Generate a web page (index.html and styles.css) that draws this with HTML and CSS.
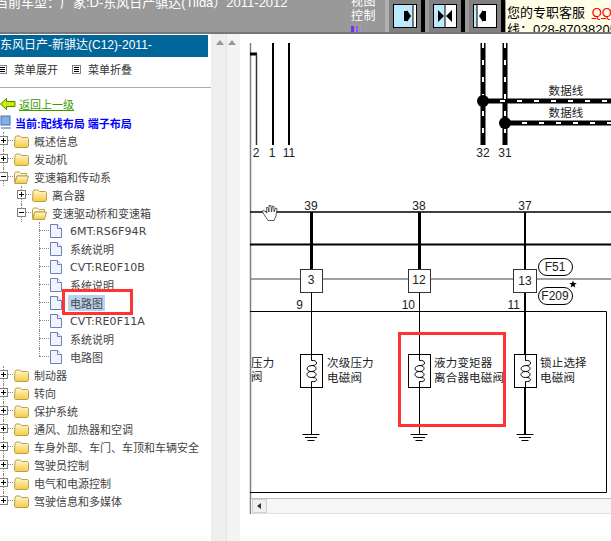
FILE: index.html
```html
<!DOCTYPE html>
<html lang="zh-CN">
<head>
    <meta charset="UTF-8">
    <title>电路图</title>
    <link rel="stylesheet" href="styles.css">
</head>
<body>
    <svg class="defs" width="0" height="0">
        <defs>
            <linearGradient id="folder-fill" x1="0" y1="0" x2="0" y2="1">
                <stop offset="0" stop-color="#fff8d2"/>
                <stop offset="1" stop-color="#f6c93e"/>
            </linearGradient>
        </defs>
        <symbol id="folder" viewBox="0 0 15 14">
            <path d="M1 3.5 L2 2 H6 L7.5 3.5 H13.5 L14.5 4.5 V12.5 L13.5 13.5 H1.5 L0.5 12.5 Z" fill="url(#folder-fill)" stroke="#b9a050"/>
        </symbol>
        <symbol id="folder-open" viewBox="0 0 15 14">
            <path d="M0.5 3.5 L1.5 2 H5.5 L7 3.5 H12.5 V6 H3 L0.5 12.5 Z" fill="#fff6d0" stroke="#b9a050"/>
            <path d="M3 6 H14.5 L12.5 13.5 H0.8 Z" fill="url(#folder-fill)" stroke="#b9a050"/>
        </symbol>
        <symbol id="file" viewBox="0 0 12 14">
            <path d="M0.5 0.5 H7.5 L11.5 4.5 V13.5 H0.5 Z" fill="#eef3fd" stroke="#6f7fb8"/>
            <path d="M7.5 0.5 V4.5 H11.5" fill="#fff" stroke="#6f7fb8"/>
        </symbol>
        <symbol id="menu-box" viewBox="0 0 9 9">
            <rect x="0.5" y="0.5" width="8" height="8" fill="#fff" stroke="#808080"/>
            <path d="M2 2.5 H7 M2 4.5 H7 M2 6.5 H7" stroke="#000"/>
        </symbol>
    </svg>

    <header class="topbar">
        <div class="car-title">当前车型：厂家:D-东风日产骐达(Tiida）2011-2012</div>
        <div class="view-ctl">
            <span>视图</span>
            <span>控制</span>
            <i class="purple-bits"></i>
        </div>
        <div class="view-btns">
            <div class="btn-cell">
                <svg width="24" height="24" viewBox="0 0 24 24">
                    <rect x="0.5" y="0.5" width="23" height="23" fill="#bdeaff" stroke="#000"/>
                    <rect x="20" y="1" width="3" height="22" fill="#fff"/>
                    <path d="M20 1 V23" stroke="#000"/>
                    <path d="M11 7 H14 V6 L18 12 L14 18 V17 H11 Z" fill="#000"/>
                </svg>
            </div>
            <div class="btn-cell">
                <svg width="24" height="24" viewBox="0 0 24 24">
                    <rect x="0.5" y="0.5" width="23" height="23" fill="#bdeaff" stroke="#000"/>
                    <rect x="12" y="1" width="11" height="22" fill="#fff"/>
                    <path d="M12 1 V23" stroke="#000"/>
                    <path d="M5 6 L11 12 L5 18 Z M19 6 L13 12 L19 18 Z" fill="#000"/>
                </svg>
            </div>
            <div class="btn-cell">
                <svg width="24" height="24" viewBox="0 0 24 24">
                    <rect x="0.5" y="0.5" width="23" height="23" fill="#fff" stroke="#000"/>
                    <rect x="1" y="1" width="3" height="22" fill="#bdeaff"/>
                    <path d="M4 1 V23" stroke="#000"/>
                    <path d="M13 7 H10 V6 L6 12 L10 18 V17 H13 Z" fill="#000"/>
                </svg>
            </div>
        </div>
        <div class="service">
            <div>您的专职客服 <a class="qq">QQ</a></div>
            <div>线：028-87038205</div>
        </div>
    </header>

    <main class="layout">
        <aside class="side">
            <div class="side-title">东风日产-新骐达(C12)-2011-</div>
            <div class="menu-bar">
                <span class="menu-item"><svg width="9" height="9"><use href="#menu-box"/></svg>菜单展开</span>
                <span class="menu-item"><svg width="9" height="9"><use href="#menu-box"/></svg>菜单折叠</span>
            </div>
            <a class="back-link">
                <svg width="16" height="12" viewBox="0 0 16 12">
                    <path d="M0.5 6 L6.5 0.5 V3.5 H15 V8.5 H6.5 V11.5 Z" fill="#d8e800" stroke="#3b8a00"/>
                </svg>
                <span>返回上一级</span>
            </a>
            <div class="current">
                <svg width="12" height="15" viewBox="0 0 12 15">
                    <rect x="1" y="1" width="9" height="9" fill="#7fb2ea" stroke="#4a6fa8"/>
                    <path d="M1 12 H11 V14 H1 Z" fill="#9db4d6"/>
                </svg>
                <span>当前:配线布局 端子布局</span>
            </div>

            <ul class="tree">
                <li class="row lv0 line"><b class="tog plus"></b><svg class="ico"><use href="#folder"/></svg><span>概述信息</span></li>
                <li class="row lv0 line"><b class="tog plus"></b><svg class="ico"><use href="#folder"/></svg><span>发动机</span></li>
                <li class="row lv0 line"><b class="tog"></b><svg class="ico"><use href="#folder-open"/></svg><span>变速箱和传动系</span></li>
                <li class="row lv1 line"><b class="tog plus"></b><svg class="ico"><use href="#folder"/></svg><span>离合器</span></li>
                <li class="row lv1 line"><b class="tog"></b><svg class="ico"><use href="#folder-open"/></svg><span>变速驱动桥和变速箱</span></li>
                <li class="row lv2 line"><svg class="doc"><use href="#file"/></svg><span class="en">6MT:RS6F94R</span></li>
                <li class="row lv2 line"><svg class="doc"><use href="#file"/></svg><span>系统说明</span></li>
                <li class="row lv2 line"><svg class="doc"><use href="#file"/></svg><span class="en">CVT:RE0F10B</span></li>
                <li class="row lv2 line"><svg class="doc"><use href="#file"/></svg><span>系统说明</span></li>
                <li class="row lv2 line picked"><svg class="doc"><use href="#file"/></svg><span>电路图</span></li>
                <li class="row lv2 line"><svg class="doc"><use href="#file"/></svg><span class="en">CVT:RE0F11A</span></li>
                <li class="row lv2 line"><svg class="doc"><use href="#file"/></svg><span>系统说明</span></li>
                <li class="row lv2 line last"><svg class="doc"><use href="#file"/></svg><span>电路图</span></li>
                <li class="row lv0 line"><b class="tog plus"></b><svg class="ico"><use href="#folder"/></svg><span>制动器</span></li>
                <li class="row lv0 line"><b class="tog plus"></b><svg class="ico"><use href="#folder"/></svg><span>转向</span></li>
                <li class="row lv0 line"><b class="tog plus"></b><svg class="ico"><use href="#folder"/></svg><span>保护系统</span></li>
                <li class="row lv0 line"><b class="tog plus"></b><svg class="ico"><use href="#folder"/></svg><span>通风、加热器和空调</span></li>
                <li class="row lv0 line"><b class="tog plus"></b><svg class="ico"><use href="#folder"/></svg><span>车身外部、车门、车顶和车辆安全</span></li>
                <li class="row lv0 line"><b class="tog plus"></b><svg class="ico"><use href="#folder"/></svg><span>驾驶员控制</span></li>
                <li class="row lv0 line"><b class="tog plus"></b><svg class="ico"><use href="#folder"/></svg><span>电气和电源控制</span></li>
                <li class="row lv0 line last"><b class="tog plus"></b><svg class="ico"><use href="#folder"/></svg><span>驾驶信息和多媒体</span></li>
            </ul>
        </aside>

        <div class="splitter">
            <div class="split-col"><i class="tri"></i></div>
            <div class="split-col narrow"><i class="tri"></i></div>
        </div>

        <svg class="diagram" width="371" height="507" viewBox="240 34 371 507">
            <defs>
                <g id="coil">
                    <rect x="-11" y="0" width="22" height="33" fill="#fff" stroke="#000"/>
                    <path d="M0 0 V6 M0 27 V33" stroke="#000"/>
                    <path d="M0 6 C6 5 7 11 1 11 C-6 11 -6 17 0 17 C6 17 6 11 0 11 M0 17 C-6 17 -6 23 0 23 C6 23 6 17 0 17 M1 23 C7 23 6 28 0 27" fill="none" stroke="#000"/>
                </g>
                <g id="ground">
                    <path d="M-8.5 0.5 H8.5 M-6 3.5 H6 M-3.5 6.5 H3.5" stroke="#000"/>
                </g>
            </defs>

            <!-- upper part -->
            <path d="M250.5 43 V514" stroke="#808080" stroke-width="1.5"/>
            <path d="M250 54 H257" stroke="#000" stroke-width="3"/>
            <path d="M256.5 54 V145" stroke="#333" stroke-width="1.5"/>
            <path d="M273 43 V145 M289 43 V145" stroke="#000" stroke-width="2"/>
            <path class="bus" d="M483 43 V145 M505 43 V145 M483 101 H611 M505 123 H611"/>
            <path class="bus-dash" d="M483 43 V145 M505 43 V145 M483 101 H611 M505 123 H611"/>
            <circle cx="483" cy="101" r="6"/>
            <circle cx="505" cy="123" r="6"/>
            <text class="lbl mid" x="566" y="95">数据线</text>
            <text class="lbl mid" x="566" y="117">数据线</text>
            <text class="num mid" x="256" y="157">2</text>
            <text class="num mid" x="272" y="157">1</text>
            <text class="num mid" x="289" y="157">11</text>
            <text class="num mid" x="483" y="157">32</text>
            <text class="num mid" x="505" y="157">31</text>

            <!-- bus bars -->
            <path d="M250 212 H611" stroke="#000" stroke-width="1.5"/>
            <path d="M250 244.5 H611" stroke="#000" stroke-width="2"/>
            <path d="M250 279 H611" stroke="#808080" stroke-width="1.5"/>
            <path d="M311.5 212 V270 M419.5 212 V270" stroke="#000" stroke-width="3"/>
            <path d="M525 212 V270" stroke="#000" stroke-width="2"/>
            <circle cx="525" cy="244.5" r="1.5"/>
            <text class="num mid" x="311" y="210">39</text>
            <text class="num mid" x="419" y="210">38</text>
            <text class="num mid" x="525" y="210">37</text>

            <rect class="fuse" x="300.5" y="269.5" width="22" height="23"/>
            <rect class="fuse" x="408.5" y="269.5" width="22" height="23"/>
            <rect class="fuse" x="513.5" y="269.5" width="23" height="23"/>
            <text class="num mid" x="311" y="284">3</text>
            <text class="num mid" x="419" y="284">12</text>
            <text class="num mid" x="525" y="285">13</text>

            <rect class="pill" x="538.5" y="258.5" width="34" height="17" rx="8.5"/>
            <rect class="pill" x="538.5" y="287.5" width="34" height="17" rx="8.5"/>
            <text class="num mid" x="555" y="271">F51</text>
            <text class="num mid" x="555" y="300">F209</text>
            <path d="M573 280.5 L574 283 H576.8 L574.6 284.8 L575.4 287.5 L573 285.9 L570.6 287.5 L571.4 284.8 L569.2 283 H572 Z"/>

            <!-- hand cursor -->
            <path d="M262 211 L264 210.5 L267 213 L266.5 207.5 L268 207.5 L269 212 L269 205.5 L271 205.5 L271.5 212 L272.5 206 L274 206.5 L274 212 L275.5 208 L277 208.5 L276 216 L274 220.5 H268 L265 216 Z" fill="#fff" stroke="#333" stroke-width="0.8"/>

            <!-- frame with valves -->
            <path d="M250 311.5 H606.5 V492.5 H250" fill="none" stroke="#000"/>
            <path d="M311.5 293 V434 M419.5 293 V434" stroke="#000"/>
            <path d="M525 293 V434" stroke="#000" stroke-width="2"/>
            <text class="num end" x="303" y="309">9</text>
            <text class="num end" x="415" y="309">10</text>
            <text class="num end" x="520" y="309">11</text>
            <use href="#coil" x="311.5" y="354.5"/>
            <use href="#coil" x="419.5" y="354.5"/>
            <use href="#coil" x="525.5" y="354.5"/>
            <use href="#ground" x="311" y="434"/>
            <use href="#ground" x="419" y="434"/>
            <use href="#ground" x="525" y="434"/>
            <text class="lbl" x="251" y="367">压力</text>
            <text class="lbl" x="251" y="381">阀</text>
            <text class="lbl" x="327" y="367">次级压力</text>
            <text class="lbl" x="327" y="382">电磁阀</text>
            <text class="lbl" x="434" y="367">液力变矩器</text>
            <text class="lbl" x="434" y="382">离合器电磁阀</text>
            <text class="lbl" x="540" y="367">锁止选择</text>
            <text class="lbl" x="540" y="382">电磁阀</text>

            <!-- scrollbar -->
            <rect x="251" y="498" width="360" height="16" fill="#f7f7f7"/>
            <path d="M251 498.5 H611" stroke="#b8c2c2"/>
            <path d="M251 513.5 H611" stroke="#e2e2e2"/>
            <rect x="252.5" y="499.5" width="14" height="13" fill="#f0f0f0" stroke="#d0d0d0"/>
            <path d="M261 503 L257 506 L261 509 Z" fill="#333"/>

            <rect x="399.5" y="333.5" width="105" height="92" fill="none" stroke="#f33" stroke-width="3"/>
        </svg>
    </main>
</body>
</html>
```

FILE: styles.css
```css
html, body {
    margin: 0;
    width: 611px;
    height: 541px;
    overflow: hidden;
    background: #fff;
    font-family: "Liberation Sans", "Noto Sans CJK SC", sans-serif;
}
.defs {
    display: block;
    height: 0;
}
.topbar {
    display: flex;
    height: 32px;
    overflow: hidden;
    background: #999;
    border-bottom: 2px solid #777;
    color: #fff;
}
.car-title {
    width: 350px;
    margin: -7px 0 0 -5px;
    flex: none;
    font-size: 13px;
    line-height: 20px;
    white-space: nowrap;
}
.view-ctl {
    width: 34px;
    margin-top: -5px;
    display: flex;
    flex-direction: column;
    flex: none;
    margin-left: 6px;
    font-size: 12px;
    letter-spacing: 0.5px;
    line-height: 14px;
}
.purple-bits {
    width: 17px;
    height: 6px;
    margin-top: 3px;
    background: linear-gradient(90deg, #7b2bff 0 3px, transparent 3px 5px, #8a5cff 5px 7px, transparent 7px 9px, #a98aff 9px 10px, transparent 10px);
}
.view-btns {
    display: flex;
    flex: none;
    border-left: 4px solid #b0b0b0;
}
.btn-cell {
    width: 36px;
    padding: 4px 0 0 4px;
    box-sizing: border-box;
    background: #808080;
    border-right: 4px solid #000;
    margin-right: 4px;
}
.btn-cell svg {
    display: block;
}
.service {
    flex: 1;
    margin-left: -3px;
    padding: 4px 0 0 1px;
    background: #ffffe8;
    color: #000;
    font-size: 13px;
    line-height: 17px;
    white-space: nowrap;
}
.qq {
    margin-left: 3px;
    color: #f00;
    text-decoration: underline;
}
.layout {
    display: flex;
    height: 507px;
}
.side {
    width: 211px;
    flex: none;
    overflow: hidden;
    padding-top: 1px;
    box-sizing: border-box;
}
.side-title {
    width: 208px;
    height: 22px;
    background: #006699;
    color: #fff;
    font-size: 12px;
    line-height: 21px;
    white-space: nowrap;
}
.menu-bar {
    display: flex;
    height: 31px;
    box-sizing: border-box;
    border-bottom: 1px solid #aaa;
    padding-top: 3px;
    margin-bottom: 7px;
    font-size: 11px;
    color: #333;
    margin-left: -2px;
}
.menu-item {
    display: flex;
    align-items: center;
    gap: 7px;
    height: 18px;
    width: 74px;
}
.back-link {
    display: flex;
    align-items: center;
    gap: 3px;
    height: 18px;
    color: #3a9a00;
    font-size: 11px;
    text-decoration: underline;
}
.current {
    display: flex;
    align-items: center;
    gap: 3px;
    height: 19px;
    color: #00f;
    font-size: 11px;
    font-weight: bold;
    white-space: nowrap;
}
.tree {
    list-style: none;
    margin: 0;
    padding: 0;
}
.row {
    position: relative;
    display: flex;
    align-items: center;
    height: 18px;
    font-size: 11px;
    color: #444;
    white-space: nowrap;
}
.row span {
    flex: none;
}
.row .en {
    font-family: "DejaVu Sans", sans-serif;
    letter-spacing: 0.1px;
}
.tog {
    position: absolute;
    z-index: 1;
    top: 4px;
    display: block;
    width: 7px;
    height: 7px;
    border: 1px solid #808080;
    background: linear-gradient(#000, #000) center / 5px 1px no-repeat #fff;
}
.tog.plus {
    background: linear-gradient(#000, #000) center / 5px 1px no-repeat, linear-gradient(#000, #000) center / 1px 5px no-repeat, #fff;
}
.ico {
    width: 15px;
    height: 14px;
    flex: none;
}
.doc {
    width: 12px;
    height: 14px;
    flex: none;
}
.lv0 {
    padding-left: 14px;
}
.lv0 .tog {
    left: -1px;
}
.lv1 {
    padding-left: 32px;
}
.lv1 .tog {
    left: 17px;
}
.lv2 {
    padding-left: 50px;
}
.lv0 span, .lv1 span {
    margin-left: 5px;
}
.lv2 span {
    margin-left: 8px;
}
/* dotted guides */
.line::before {
    content: "";
    position: absolute;
    top: 0;
    bottom: 0;
    border-left: 1px dotted #888;
}
.line::after {
    content: "";
    position: absolute;
    top: 8px;
    border-top: 1px dotted #888;
}
.last::before {
    bottom: 10px;
}
.lv0::before, .lv0::after {
    left: 3px;
}
.lv1::before, .lv1::after {
    left: 21px;
}
.lv2::before, .lv2::after {
    left: 39px;
}
.line::after {
    width: 10px;
}
.picked {
    z-index: 1;
}
.picked span {
    margin-left: 6px;
    padding: 0 2px;
    background: #bcd2ee;
}
.picked span::after {
    content: "";
    position: absolute;
    left: 62px;
    top: -5px;
    width: 65px;
    height: 20px;
    border: 3px solid #f33;
}
.splitter {
    display: flex;
    width: 29px;
    flex: none;
}
.split-col {
    width: 15px;
    box-sizing: border-box;
    background: #eeeeee;
    padding: 6px 0 0 5px;
}
.split-col.narrow {
    width: 14px;
    background: #f4f4f4;
    border-left: 1px solid #e4e4e4;
    padding-left: 1px;
}
.tri {
    display: block;
    width: 0;
    height: 0;
    border: 4px solid transparent;
    border-top: 0;
    border-bottom: 5px solid #999;
}
.diagram {
    display: block;
    flex: none;
}
.diagram text {
    fill: #222;
}
.lbl {
    font-size: 11.5px;
    letter-spacing: 0.2px;
}
.num {
    font-size: 12px;
}
.mid {
    text-anchor: middle;
}
.end {
    text-anchor: end;
}
.bus {
    fill: none;
    stroke: #000;
    stroke-width: 5;
}
.bus-dash {
    fill: none;
    stroke: #fff;
    stroke-width: 2;
    stroke-dasharray: 5 12;
}
.fuse {
    fill: #fff;
    stroke: #333;
}
.pill {
    fill: #fff;
    stroke: #000;
}
```
